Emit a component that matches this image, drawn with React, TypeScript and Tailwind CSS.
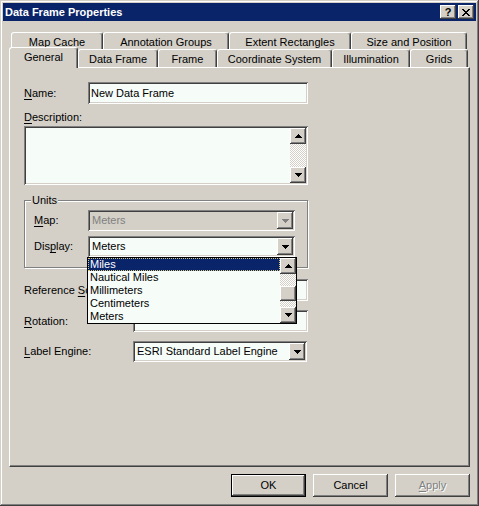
import React from 'react';

// classic 3D bevels
const RAISED =
  'bg-[#d4d0c8] shadow-[inset_-1px_-1px_#404040,inset_1px_1px_#ffffff,inset_-2px_-2px_#808080]';
const SUNKEN =
  'shadow-[inset_1px_1px_#808080,inset_-1px_-1px_#ffffff,inset_2px_2px_#404040,inset_-2px_-2px_#d4d0c8]';
const CHECKER =
  'bg-[repeating-conic-gradient(#ffffff_0%_25%,#d4d0c8_0%_50%)] bg-[length:2px_2px]';
const FIELD_BG = 'bg-[#f6fcf8]';

const Arrow: React.FC<{ up?: boolean; color?: string }> = ({ up = false, color = '#000' }) => (
  <svg
    width="7"
    height="4"
    viewBox="0 0 7 4"
    shapeRendering="crispEdges"
    className={up ? 'rotate-180' : ''}
  >
    <path d="M0 0h7v1h-1v1h-1v1h-1v1h-1v-1h-1v-1h-1v-1h-1z" fill={color} />
  </svg>
);

const ArrowButton: React.FC<{ up?: boolean; color?: string; tall?: boolean }> = ({
  up,
  color,
  tall,
}) => (
  <div
    className={`${RAISED} w-[16px] ${tall ? 'h-[17px]' : 'h-[16px]'} shrink-0 flex items-center justify-center`}
  >
    <Arrow up={up} color={color} />
  </div>
);

const Mn: React.FC<{ children: React.ReactNode }> = ({ children }) => (
  <span className="underline underline-offset-[2px]">{children}</span>
);

const BackTab: React.FC<{ label: string; className: string }> = ({ label, className }) => (
  <div
    className={`${className} h-[17px] border-t border-l border-white border-r border-r-[#404040] rounded-t-[3px] shadow-[inset_-1px_0_#808080] text-center pt-[3px] leading-[13px]`}
  >
    {label}
  </div>
);

const FrontTab: React.FC<{ label: string; className: string; active?: boolean }> = ({
  label,
  className,
  active,
}) => (
  <div
    className={`${className} ${
      active ? 'h-[21px] -mb-[1px] relative z-10 pt-[3px]' : 'h-[18px] pt-[3px]'
    } bg-[#d4d0c8] border-t border-l border-white border-r border-r-[#404040] rounded-t-[3px] shadow-[inset_-1px_0_#808080] text-center leading-[13px]`}
  >
    {label}
  </div>
);

const Combo: React.FC<{
  value: string;
  className: string;
  disabled?: boolean;
  children?: React.ReactNode;
}> = ({ value, className, disabled, children }) => (
  <div
    className={`relative ${className} h-[21px] p-[2px] flex items-center ${SUNKEN} ${
      disabled ? 'bg-[#d4d0c8] text-[#808080]' : FIELD_BG
    }`}
  >
    <span className="flex-1 pl-[2px] leading-[13px]">{value}</span>
    <ArrowButton tall color={disabled ? '#808080' : '#000'} />
    {children}
  </div>
);

const UNITS = ['Miles', 'Nautical Miles', 'Millimeters', 'Centimeters', 'Meters'];

const UnitsList: React.FC = () => (
  <div className={`absolute top-full -left-[1px] w-[210px] h-[67px] border border-black ${FIELD_BG} text-black flex z-20`}>
    <div className="flex-1 flex flex-col">
      {UNITS.map((u, i) => (
        <div
          key={u}
          className={`h-[13px] leading-[13px] pl-[2px] ${
            i === 0
              ? 'bg-[#0a246a] text-white outline-1 outline-dotted outline-[#d8c878] -outline-offset-1'
              : ''
          }`}
        >
          {u}
        </div>
      ))}
    </div>
    <div className="w-[16px] flex flex-col">
      <ArrowButton up />
      <div className={`h-[12px] ${CHECKER}`} />
      <div className={`${RAISED} h-[15px]`} />
      <div className={`flex-1 ${CHECKER}`} />
      <ArrowButton />
    </div>
  </div>
);

export default function App() {
  return (
    <div className="w-[479px] h-[506px] bg-[#d4d0c8] p-[3px] text-[11px] text-black font-['Liberation_Sans',Arial,sans-serif] shadow-[inset_-1px_-1px_#404040,inset_1px_1px_#d4d0c8,inset_-2px_-2px_#808080,inset_2px_2px_#ffffff]">
      {/* title bar */}
      <div className="h-[18px] bg-[#0a246a] flex items-center pl-[2px] pr-[2px]">
        <span className="flex-1 text-white font-bold leading-[13px]">Data Frame Properties</span>
        <div className="flex gap-[2px]">
          <div className={`${RAISED} w-[16px] h-[14px] flex items-center justify-center font-bold text-[11px] leading-none`}>
            ?
          </div>
          <div className={`${RAISED} w-[16px] h-[14px] flex items-center justify-center`}>
            <svg width="8" height="7" viewBox="0 0 8 7" shapeRendering="crispEdges">
              <path
                d="M0 0h2v1h1v1h2v-1h1v-1h2v1h-1v1h-1v1h-1v1h1v1h1v1h1v1h-2v-1h-1v-1h-2v1h-1v1h-2v-1h1v-1h1v-1h1v-1h-1v-1h-1v-1h-1z"
                fill="#000"
              />
            </svg>
          </div>
        </div>
      </div>

      <div className="px-[6px] pt-[11px]">
        {/* tabs */}
        <div className="flex ml-[2px]">
          <BackTab label="Map Cache" className="w-[92px]" />
          <BackTab label="Annotation Groups" className="w-[126px]" />
          <BackTab label="Extent Rectangles" className="w-[122px]" />
          <BackTab label="Size and Position" className="w-[116px]" />
        </div>
        <div className="flex items-end h-[18px]">
          <FrontTab label="General" className="w-[69px]" active />
          <FrontTab label="Data Frame" className="w-[80px]" />
          <FrontTab label="Frame" className="w-[59px]" />
          <FrontTab label="Coordinate System" className="w-[115px]" />
          <FrontTab label="Illumination" className="w-[78px]" />
          <FrontTab label="Grids" className="w-[58px]" />
        </div>

        {/* General page */}
        <div className="w-[461px] h-[400px] border-l border-t border-white border-r border-b border-r-[#404040] border-b-[#404040] shadow-[inset_-1px_-1px_#808080] pt-[14px] pl-[14px] flex flex-col">
          <div className="flex items-center h-[22px]">
            <span className="w-[64px]">
              <Mn>N</Mn>ame:
            </span>
            <div className={`${SUNKEN} ${FIELD_BG} w-[220px] h-[22px] pl-[3px] flex items-center`}>
              New Data Frame
            </div>
          </div>

          <div className="mt-[7px] h-[13px] leading-[13px]">
            <Mn>D</Mn>escription:
          </div>
          <div className={`${SUNKEN} ${FIELD_BG} mt-[2px] w-[284px] h-[59px] p-[2px] flex justify-end`}>
            <div className="w-[16px] flex flex-col">
              <ArrowButton up />
              <div className={`flex-1 ${CHECKER}`} />
              <ArrowButton />
            </div>
          </div>

          {/* Units group */}
          <div className="relative mt-[15px] w-[284px] h-[68px] border border-[#808080] shadow-[inset_1px_1px_#ffffff,1px_1px_#ffffff] pt-[9px] pl-[9px] flex flex-col gap-[5px]">
            <span className="absolute left-[6px] -top-[7px] px-[1px] bg-[#d4d0c8] leading-[13px]">
              Units
            </span>
            <div className="flex items-center">
              <span className="w-[54px]">
                <Mn>M</Mn>ap:
              </span>
              <Combo value="Meters" className="w-[207px]" disabled />
            </div>
            <div className="flex items-center relative z-20">
              <span className="w-[54px]">
                Dis<Mn>p</Mn>lay:
              </span>
              <Combo value="Meters" className="w-[207px]">
                <UnitsList />
              </Combo>
            </div>
          </div>

          <div className="flex items-center mt-[11px] h-[22px]">
            <span className="w-[109px] whitespace-nowrap">
              Reference <Mn>S</Mn>cale:
            </span>
            <div className={`${SUNKEN} ${FIELD_BG} w-[175px] h-[22px]`} />
          </div>

          <div className="flex items-center mt-[9px] h-[22px]">
            <span className="w-[109px]">
              <Mn>R</Mn>otation:
            </span>
            <div className={`${SUNKEN} ${FIELD_BG} w-[175px] h-[22px]`} />
          </div>

          <div className="flex items-center mt-[9px]">
            <span className="w-[109px]">
              <Mn>L</Mn>abel Engine:
            </span>
            <Combo value="ESRI Standard Label Engine" className="w-[174px]" />
          </div>
        </div>

        {/* dialog buttons */}
        <div className="mt-[7px] flex justify-end gap-[7px]">
          <div className="w-[75px] h-[23px] border border-black">
            <div className={`${RAISED} w-full h-full flex items-center justify-center`}>OK</div>
          </div>
          <div className={`${RAISED} w-[75px] h-[23px] flex items-center justify-center`}>Cancel</div>
          <div
            className={`${RAISED} w-[75px] h-[23px] flex items-center justify-center text-[#808080] [text-shadow:1px_1px_0_#ffffff]`}
          >
            <span>
              <Mn>A</Mn>pply
            </span>
          </div>
        </div>
      </div>
    </div>
  );
}
